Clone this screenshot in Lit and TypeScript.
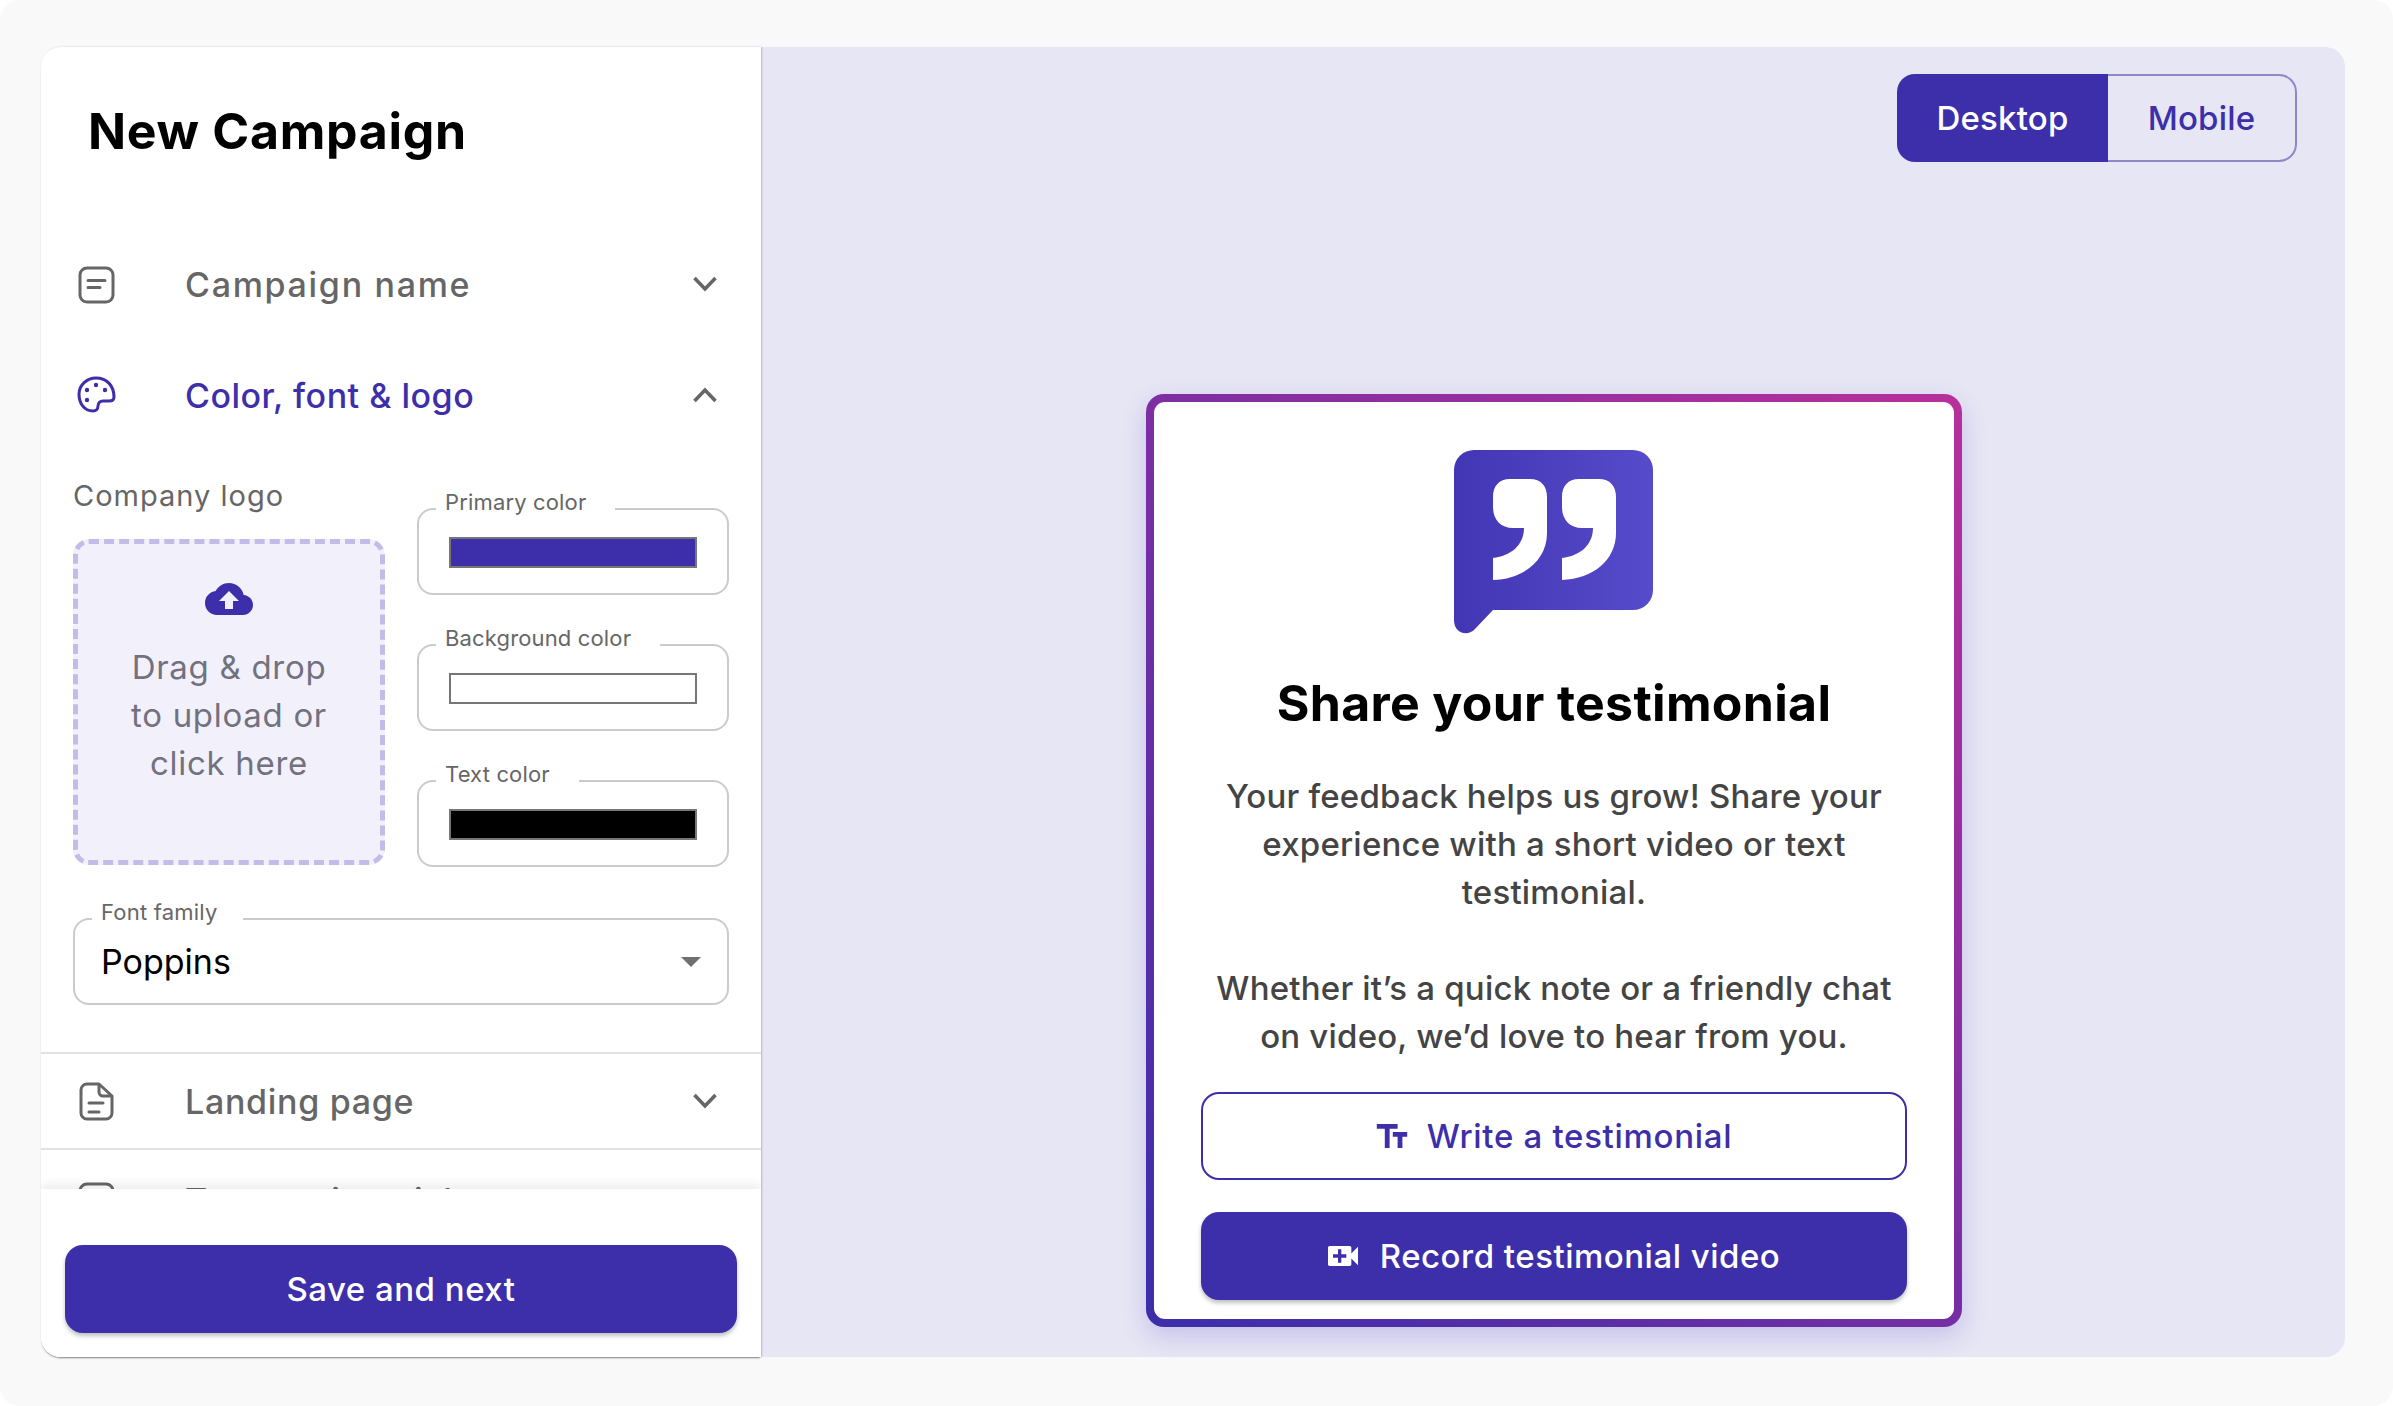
import { LitElement, css, html, svg, type TemplateResult } from 'lit';
import { customElement, property } from 'lit/decorators.js';

const chevron = (up: boolean): TemplateResult => html`<svg class="chevron" viewBox="0 0 26 16">
  <path d=${up ? 'M2.5 14 13 3l10.5 11' : 'M2.5 2 13 13 23.5 2'} fill="none" stroke="currentColor" stroke-width="3.6" />
</svg>`;

const noteIcon = svg`<rect x="3" y="3" width="33" height="34" rx="7" fill="none" stroke="currentColor" stroke-width="3" />
  <path d="M11 15.5h17M11 22.5h12" stroke="currentColor" stroke-width="3" stroke-linecap="round" />`;

const paletteIcon = svg`<path d="M19 2C30 2 37 10 37 21c0 3-2 4-5 4h-6c-3 0-5 2-5 5s-2 5-5 5C7 35 2 27 2 18 2 9 10 2 19 2Z" fill="none" stroke="currentColor" stroke-width="3" />
  <circle cx="10" cy="14" r="2.2" fill="currentColor" /><circle cx="19" cy="9" r="2.2" fill="currentColor" />
  <circle cx="28" cy="14" r="2.2" fill="currentColor" /><circle cx="10" cy="24" r="2.2" fill="currentColor" />`;

const docIcon = svg`<path d="M10 2h12l13 12v17a6 6 0 0 1-6 6H10a6 6 0 0 1-6-6V8a6 6 0 0 1 6-6Z" fill="none" stroke="currentColor" stroke-width="3" stroke-linejoin="round" />
  <path d="M22 3v7a4 4 0 0 0 4 4h8" fill="none" stroke="currentColor" stroke-width="3" />
  <path d="M12 21h14M12 30h10" stroke="currentColor" stroke-width="3" stroke-linecap="round" />`;

const quoteMark = 'M56 29H76C87 29 93 36 93 47V83C93 110 70 129 39 130V108C57 106 70 95 70 78H59C47 78 39 70 39 57V47C39 36 45 29 56 29Z';

@customElement('section-row')
export class SectionRow extends LitElement {
  @property() label = '';
  @property({ type: Boolean, reflect: true }) open = false;
  @property({ attribute: false }) icon: unknown = noteIcon;

  render(): TemplateResult {
    return html`<div class="row">
      <svg class="icon" viewBox="0 0 39 39">${this.icon}</svg>
      <span class="label">${this.label}</span>
      ${chevron(this.open)}
    </div>`;
  }

  static styles = css`
    :host {
      display: block;
      color: #666666;
    }

    :host([open]) {
      color: #3d2eaa;
    }

    .row {
      display: flex;
      align-items: center;
      height: var(--row-height, 96px);
      padding: 0 43px 0 36px;
    }

    .icon {
      width: 39px;
      height: 39px;
      flex: none;
    }

    .label {
      flex: 1;
      margin-left: 69px;
      font-size: 34px;
      font-weight: 500;
      letter-spacing: var(--label-spacing, 0.7px);
    }

    .chevron {
      width: 26px;
      height: 16px;
      color: #666666;
    }
  `;
}

@customElement('color-field')
export class ColorField extends LitElement {
  @property() label = '';
  @property() color = '#ffffff';

  render(): TemplateResult {
    return html`<div class="field">
      <span class="legend">${this.label}</span>
      <div class="swatch" style="background: ${this.color}"></div>
    </div>`;
  }

  static styles = css`
    .field {
      position: relative;
      box-sizing: border-box;
      height: 87px;
      padding: 27px 30px 0;
      border: 2px solid #cbcbcb;
      border-radius: 16px;
    }

    .legend {
      position: absolute;
      left: 17px;
      top: -22px;
      padding: 0 29px 2px 9px;
      background: #ffffff;
      color: #666666;
      font-size: 22px;
      line-height: 28px;
      letter-spacing: 0.15px;
    }

    .swatch {
      box-sizing: border-box;
      height: 31px;
      border: 2px solid #767676;
    }
  `;
}

@customElement('app-root')
export class AppRoot extends LitElement {
  render(): TemplateResult {
    return html`<div class="frame">
      <aside class="panel">
        <div class="scroll">
          <h1>New Campaign</h1>
          <section-row class="name-row" label="Campaign name" .icon=${noteIcon}></section-row>
          <section-row class="open-row" label="Color, font &amp; logo" open .icon=${paletteIcon}></section-row>
          <div class="details">
            <div class="logo-col">
              <div class="logo-label">Company logo</div>
              <div class="drop">
                <svg class="cloud" viewBox="0 0 24 24">
                  <path d="M19.35 10.04C18.67 6.59 15.64 4 12 4 9.11 4 6.6 5.64 5.35 8.04 2.34 8.36 0 10.91 0 14c0 3.31 2.69 6 6 6h13c2.76 0 5-2.24 5-5 0-2.64-2.05-4.78-4.65-4.96M14 13v4h-4v-4H7l5-5 5 5z" />
                </svg>
                <span>Drag &amp; drop<br />to upload or<br />click here</span>
              </div>
            </div>
            <div class="color-col">
              <color-field label="Primary color" color="#3d2eaa"></color-field>
              <color-field label="Background color" color="#ffffff"></color-field>
              <color-field label="Text color" color="#000000"></color-field>
            </div>
            <div class="select">
              <span class="select-legend">Font family</span>
              <span class="select-value">Poppins</span>
              <span class="caret"></span>
            </div>
          </div>
          <section-row class="ruled landing-row" label="Landing page" .icon=${docIcon}></section-row>
          <section-row class="ruled last" label="Text testimonial" .icon=${noteIcon}></section-row>
        </div>
        <div class="footer">
          <button class="btn solid">Save and next</button>
        </div>
      </aside>

      <main class="preview">
        <div class="toggle">
          <span class="seg active">Desktop</span>
          <span class="seg">Mobile</span>
        </div>
        <div class="card">
          <div class="card-inner">
            <svg class="logo" viewBox="0 0 200 186">
              <defs>
                <linearGradient id="bubble" x1="0" x2="1" y1="0" y2="0">
                  <stop offset="0" stop-color="#4336b4" />
                  <stop offset="1" stop-color="#564bca" />
                </linearGradient>
              </defs>
              <path d="M20 0H179a20 20 0 0 1 20 20V140a20 20 0 0 1-20 20H39L20 180c-6 6-20 4-20-10V20A20 20 0 0 1 20 0Z" fill="url(#bubble)" />
              <path d=${quoteMark} fill="#ffffff" />
              <path d=${quoteMark} fill="#ffffff" transform="translate(69 0)" />
            </svg>
            <h2>Share your testimonial</h2>
            <p>
              Your feedback helps us grow! Share your<br />experience with a short video or text<br />testimonial.
            </p>
            <p class="second">Whether it’s a quick note or a friendly chat<br />on video, we’d love to hear from you.</p>
            <button class="btn outline">
              <svg class="tt" viewBox="2 3.5 20 16"><path d="M2.5 4v3h5v12h3V7h5V4zm19 5h-9v3h3v7h3v-7h3z" /></svg>
              Write a testimonial
            </button>
            <button class="btn solid record">
              <svg class="cam" viewBox="3 6 18 12">
                <path d="M17 10.5V7c0-.55-.45-1-1-1H4c-.55 0-1 .45-1 1v10c0 .55.45 1 1 1h12c.55 0 1-.45 1-1v-3.5l4 4v-11zM14 13h-3v3H9v-3H6v-2h3V8h2v3h3z" />
              </svg>
              Record testimonial video
            </button>
          </div>
        </div>
      </main>
    </div>`;
  }

  static styles = css`
    :host {
      display: block;
      height: 100vh;
      background: #ffffff;
      font-family: Inter, 'Open Sans', sans-serif;
    }

    * {
      font-family: inherit;
    }

    .frame {
      box-sizing: border-box;
      display: flex;
      height: 100%;
      padding: 47px 48px 49px 41px;
      background: #f9f9fa;
      border-radius: 20px;
    }

    .panel {
      display: flex;
      flex-direction: column;
      width: 720px;
      flex: none;
      background: #ffffff;
      border-radius: 20px 0 0 20px;
      box-shadow: 0 2px 2px -1px rgba(0, 0, 0, 0.45), 1px 0 2px rgba(60, 60, 120, 0.25);
      position: relative;
      z-index: 1;
    }

    .scroll {
      flex: 1;
      min-height: 0;
      overflow: hidden;
    }

    h1 {
      margin: 54px 0 75px 47px;
      color: #000000;
      font-size: 50px;
      line-height: 60px;
      font-weight: 700;
      letter-spacing: 0.7px;
    }

    .name-row {
      --label-spacing: 1.7px;
    }

    .open-row {
      margin-top: 15px;
      --label-spacing: 0.5px;
    }

    .landing-row {
      --row-height: 94px;
    }

    .details {
      display: grid;
      grid-template-columns: 312px 312px;
      column-gap: 32px;
      padding: 0 32px;
    }

    .logo-label {
      margin: 33px 0 23px;
      color: #666666;
      font-size: 29px;
      line-height: 40px;
      letter-spacing: 1px;
    }

    .drop {
      box-sizing: border-box;
      height: 326px;
      padding-top: 31px;
      display: flex;
      flex-direction: column;
      align-items: center;
      background: #f2f1fb;
      border: 5px dashed #c2bce8;
      border-radius: 16px;
      color: #72717f;
      font-size: 33px;
      line-height: 48px;
      letter-spacing: 0.7px;
      text-align: center;
    }

    .cloud {
      width: 48px;
      height: 48px;
      margin-bottom: 20px;
      fill: #3d2eaa;
    }

    .color-col {
      display: flex;
      flex-direction: column;
      gap: 49px;
      padding-top: 65px;
    }

    .select {
      grid-column: 1 / 3;
      position: relative;
      box-sizing: border-box;
      display: flex;
      align-items: center;
      justify-content: space-between;
      height: 87px;
      margin-top: 51px;
      padding: 0 26px;
      border: 2px solid #cbcbcb;
      border-radius: 16px;
    }

    .select-legend {
      position: absolute;
      left: 17px;
      top: -22px;
      padding: 0 26px 2px 9px;
      background: #ffffff;
      color: #666666;
      font-size: 22px;
      line-height: 28px;
      letter-spacing: 0.2px;
    }

    .select-value {
      color: #000000;
      font-size: 34px;
    }

    .caret {
      border-top: 10px solid #707070;
      border-left: 10px solid transparent;
      border-right: 10px solid transparent;
    }

    .ruled {
      border-top: 2px solid #e2e2e2;
    }

    .details + .ruled {
      margin-top: 47px;
    }

    .last {
      padding-top: 2px;
    }

    .footer {
      position: relative;
      flex: none;
      height: 168px;
      box-sizing: border-box;
      padding: 56px 24px 0;
      background: #ffffff;
      border-radius: 0 0 0 20px;
      box-shadow: 0 -5px 10px rgba(0, 0, 0, 0.07);
      clip-path: inset(-20px 0 0 0);
    }

    .btn {
      display: flex;
      align-items: center;
      justify-content: center;
      width: 100%;
      height: 88px;
      box-sizing: border-box;
      border-radius: 18px;
      font-size: 33px;
      font-weight: 500;
      letter-spacing: 0.5px;
    }

    .solid {
      border: none;
      background: #3d2eaa;
      color: #ffffff;
      box-shadow: 0 3px 4px rgba(0, 0, 0, 0.25);
    }

    .outline {
      border: 2px solid #3d2eaa;
      background: #ffffff;
      color: #3d2eaa;
      letter-spacing: 0.7px;
    }

    .preview {
      flex: 1;
      display: flex;
      flex-direction: column;
      align-items: center;
      padding: 27px 48px 30px 50px;
      background: #e6e6f4;
      border-radius: 0 20px 20px 0;
    }

    .toggle {
      align-self: flex-end;
      display: flex;
      height: 88px;
    }

    .seg {
      display: flex;
      align-items: center;
      justify-content: center;
      box-sizing: border-box;
      width: 189px;
      color: #3d2eaa;
      font-size: 33px;
      font-weight: 500;
      letter-spacing: 0.2px;
      border: 2px solid #8f88c8;
      border-left: none;
      border-radius: 0 18px 18px 0;
    }

    .seg.active {
      width: 211px;
      color: #ffffff;
      background: #3d2eaa;
      border: none;
      border-radius: 18px 0 0 18px;
    }

    .card {
      box-sizing: border-box;
      width: 816px;
      margin-top: auto;
      padding: 8px;
      background: linear-gradient(45deg, #3b2eaa, #b82f9b);
      border-radius: 18px;
      box-shadow: 0 10px 24px rgba(90, 70, 210, 0.22);
    }

    .card-inner {
      display: flex;
      flex-direction: column;
      align-items: center;
      box-sizing: border-box;
      height: 917px;
      padding: 48px 47px 0;
      background: #ffffff;
      border-radius: 11px;
    }

    .logo {
      width: 200px;
      height: 186px;
      flex: none;
    }

    h2 {
      margin: 35px 0 37px;
      color: #000000;
      font-size: 50px;
      line-height: 64px;
      font-weight: 700;
      letter-spacing: 0.3px;
      text-align: center;
    }

    p {
      margin: 0;
      color: #444444;
      font-size: 33px;
      font-weight: 500;
      line-height: 48px;
      letter-spacing: 0.2px;
      text-align: center;
    }

    p.second {
      margin-top: 48px;
    }

    .card .outline {
      margin-top: 32px;
      flex: none;
    }

    .tt {
      width: 32px;
      height: 26px;
      margin-right: 19px;
      fill: #3d2eaa;
    }

    .record {
      margin-top: 32px;
      flex: none;
    }

    .cam {
      width: 30px;
      height: 20px;
      margin-right: 22px;
      fill: #ffffff;
    }
  `;
}

declare global {
  interface HTMLElementTagNameMap {
    'app-root': AppRoot;
    'section-row': SectionRow;
    'color-field': ColorField;
  }
}
